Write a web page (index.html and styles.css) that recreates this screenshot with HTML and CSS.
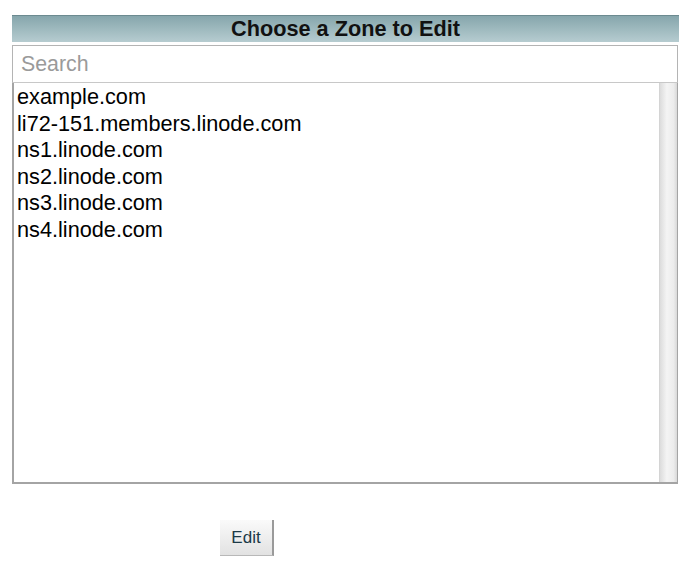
FILE: index.html
```html
<!DOCTYPE html>
<html>
<head>
<meta charset="utf-8">
<link rel="stylesheet" href="styles.css">
</head>
<body>
<div class="panel">
  <div class="title">Choose a Zone to Edit</div>
  <div class="search"><input type="text" placeholder="Search"></div>
  <div class="list">
    <ul class="items">
      <li>example.com</li>
      <li>li72-151.members.linode.com</li>
      <li>ns1.linode.com</li>
      <li>ns2.linode.com</li>
      <li>ns3.linode.com</li>
      <li>ns4.linode.com</li>
    </ul>
    <div class="scrollbar"></div>
  </div>
  <div class="actions"><button class="btn">Edit</button></div>
</div>
</body>
</html>
```
FILE: styles.css
```css
html, body { margin: 0; padding: 0; background: #fff; }
body { font-family: "Liberation Sans", Arial, sans-serif; }
.panel { margin: 15px 0 0 12px; width: 667px; }
.title {
  height: 26px;
  border-top: 1px solid #6c8a90;
  background: linear-gradient(#86a6ac, #b6ccd0);
  text-align: center;
  font-weight: bold;
  font-size: 21.7px;
  line-height: 26px;
  color: #111;
}
.search {
  margin-top: 3px;
  width: 666px;
  height: 38px;
  box-sizing: border-box;
  border: 1px solid #b4b4b4;
  border-bottom-color: #c8c8c8;
}
.search input {
  border: 0; outline: 0; margin: 0;
  width: 100%; height: 100%; box-sizing: border-box;
  padding: 0 0 0 8px;
  font-family: "Liberation Sans", Arial, sans-serif;
  font-size: 21.3px;
  color: #222;
  background: #fff;
}
.search input::placeholder { color: #9a9a9a; }
.list {
  display: flex;
  width: 666px;
  height: 401px;
  box-sizing: border-box;
  border-left: 2px solid #a4a4a4;
  border-bottom: 2px solid #a4a4a4;
  border-right: 1px solid #a4a4a4;
}
.items {
  flex: 1;
  list-style: none;
  margin: 0;
  padding: 1px 0 0 3px;
  font-size: 21.7px;
  line-height: 26.6px;
  color: #000;
}
.scrollbar {
  width: 17px;
  border-left: 1px solid #d4d4d4;
  background: linear-gradient(90deg, #dcdcdc, #f4f4f4 40%, #ececec 80%, #d8d8d8);
}
.actions { padding: 36px 0 0 208px; }
.btn {
  width: 54px; height: 36px;
  border: 0;
  border-right: 2px solid #9a9a9a;
  border-bottom: 1px solid #b8b8b8;
  background: linear-gradient(#fafafa, #e2e2e2);
  font-family: "Liberation Sans", Arial, sans-serif;
  font-size: 17px;
  color: #1c3a48;
  padding: 0;
}
```
